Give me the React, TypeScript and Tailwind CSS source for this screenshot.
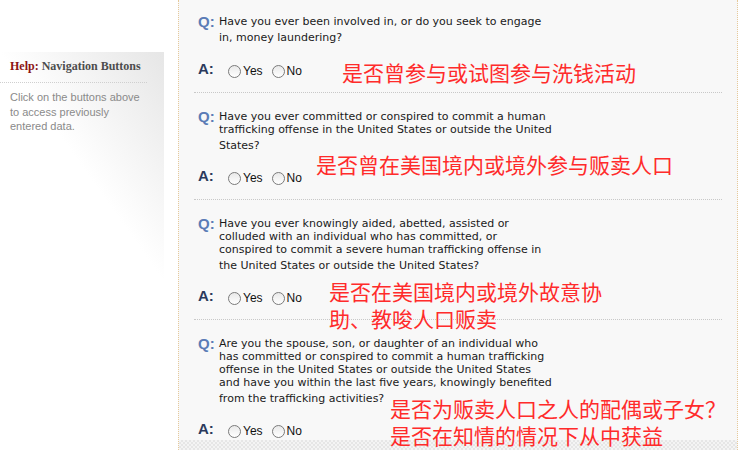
import React from 'react';

interface Item {
  lines: string[];
  notes: string[];
  noteLeft: number;
  noteTop: number;
  first?: boolean;
  last?: boolean;
}

const items: Item[] = [
  {
    lines: ['Have you ever been involved in, or do you seek to engage', 'in, money laundering?'],
    notes: ['是否曾参与或试图参与洗钱活动'],
    noteLeft: 148,
    noteTop: 59,
    first: true,
  },
  {
    lines: [
      'Have you ever committed or conspired to commit a human',
      'trafficking offense in the United States or outside the United',
      'States?',
    ],
    notes: ['是否曾在美国境内或境外参与贩卖人口'],
    noteLeft: 122,
    noteTop: 58,
  },
  {
    lines: [
      'Have you ever knowingly aided, abetted, assisted or',
      'colluded with an individual who has committed, or',
      'conspired to commit a severe human trafficking offense in',
      'the United States or outside the United States?',
    ],
    notes: ['是否在美国境内或境外故意协', '助、教唆人口贩卖'],
    noteLeft: 135,
    noteTop: 78,
  },
  {
    lines: [
      'Are you the spouse, son, or daughter of an individual who',
      'has committed or conspired to commit a human trafficking',
      'offense in the United States or outside the United States',
      'and have you within the last five years, knowingly benefited',
      'from the trafficking activities?',
    ],
    notes: ['是否为贩卖人口之人的配偶或子女？', '是否在知情的情况下从中获益'],
    noteLeft: 196,
    noteTop: 75,
    last: true,
  },
];

const Radio = ({ label }: { label: string }) => (
  <label className="flex items-center gap-[2px]">
    <span className="w-[13px] h-[13px] rounded-full border border-[#7a7a7a] bg-linear-to-b from-[#e9e9e9] to-white" />
    <span className="text-[12px] text-[#111] leading-[14px]">{label}</span>
  </label>
);

const Question = ({ item }: { item: Item }) => (
  <div
    className={`relative ${item.first ? 'pt-[15px]' : 'pt-[17px]'} ${
      item.last ? 'pb-[1px]' : 'pb-[13px] border-b border-dotted border-[#c8c8c8]'
    }`}
  >
    <div className="flex items-start pl-[4px]">
      <span className="w-[21px] text-[15px] leading-[14px] font-bold text-[#5b7cb6]">Q:</span>
      <div className="text-[11px] text-[#1a1a1a]" style={{ fontFamily: '"DejaVu Sans", Verdana, sans-serif' }}>
        {item.lines.map((l, i) => (
          <div
            key={i}
            className={`leading-[13px] whitespace-nowrap ${i === item.lines.length - 1 && i > 0 ? 'mt-[3px]' : ''}`}
          >
            {l}
          </div>
        ))}
      </div>
    </div>
    <div className={`flex items-center pl-[4px] h-[16px] ${item.first ? 'mt-[19px]' : 'mt-[18px]'}`}>
      <span className="w-[30px] text-[15px] leading-[14px] font-bold text-[#2b3a5c] -mt-[5px]">A:</span>
      <div className="flex items-center gap-[9px]">
        <Radio label="Yes" />
        <Radio label="No" />
      </div>
    </div>
    <div
      className="absolute text-[21px] leading-[26px] text-[#ff2b2b] whitespace-nowrap"
      style={{ left: item.noteLeft, top: item.noteTop, fontFamily: '"Noto Sans CJK SC", sans-serif' }}
    >
      {item.notes.map((n, i) => (
        <div key={i} className={i > 0 ? 'mt-[1px]' : ''}>
          {n}
        </div>
      ))}
    </div>
  </div>
);

export default function App() {
  return (
    <div className="w-[746px] h-[458px] bg-white flex overflow-hidden" style={{ fontFamily: '"Liberation Sans", Arial, sans-serif' }}>
      <aside className="w-[178px] shrink-0 pt-[52px]">
        <div className="w-[164px] h-[230px] bg-linear-to-bl from-[#e6e6e6] via-white to-white pt-[7px]">
          <h3
            className="pl-[10px] text-[12px] font-bold leading-[14px] text-[#4d4d4d]"
            style={{ fontFamily: '"Liberation Serif", Georgia, serif' }}
          >
            <span className="text-[#8b1414]">Help:</span> Navigation Buttons
          </h3>
          <div className="mt-[9px] w-[147px] border-t border-dotted border-[#cfcfcf]" />
          <p className="pl-[10px] w-[144px] mt-[7px] text-[11px] leading-[14.5px] text-[#8a8a8a]">
            Click on the buttons above to access previously entered data.
          </p>
        </div>
      </aside>
      <main className="w-[560px] h-[450px] shrink-0 flex flex-col bg-[#f8f8f8] border-x border-dotted border-[#e6c99a]">
        <div className="px-[15px] flex-1 flex flex-col">
          {items.map((it, i) => (
            <Question key={i} item={it} />
          ))}
        </div>
        <div className="h-[10px] bg-[repeating-conic-gradient(#e6e6e6_0%_25%,#f4f4f4_0%_50%)] bg-size-[4px_4px]" />
      </main>
    </div>
  );
}
